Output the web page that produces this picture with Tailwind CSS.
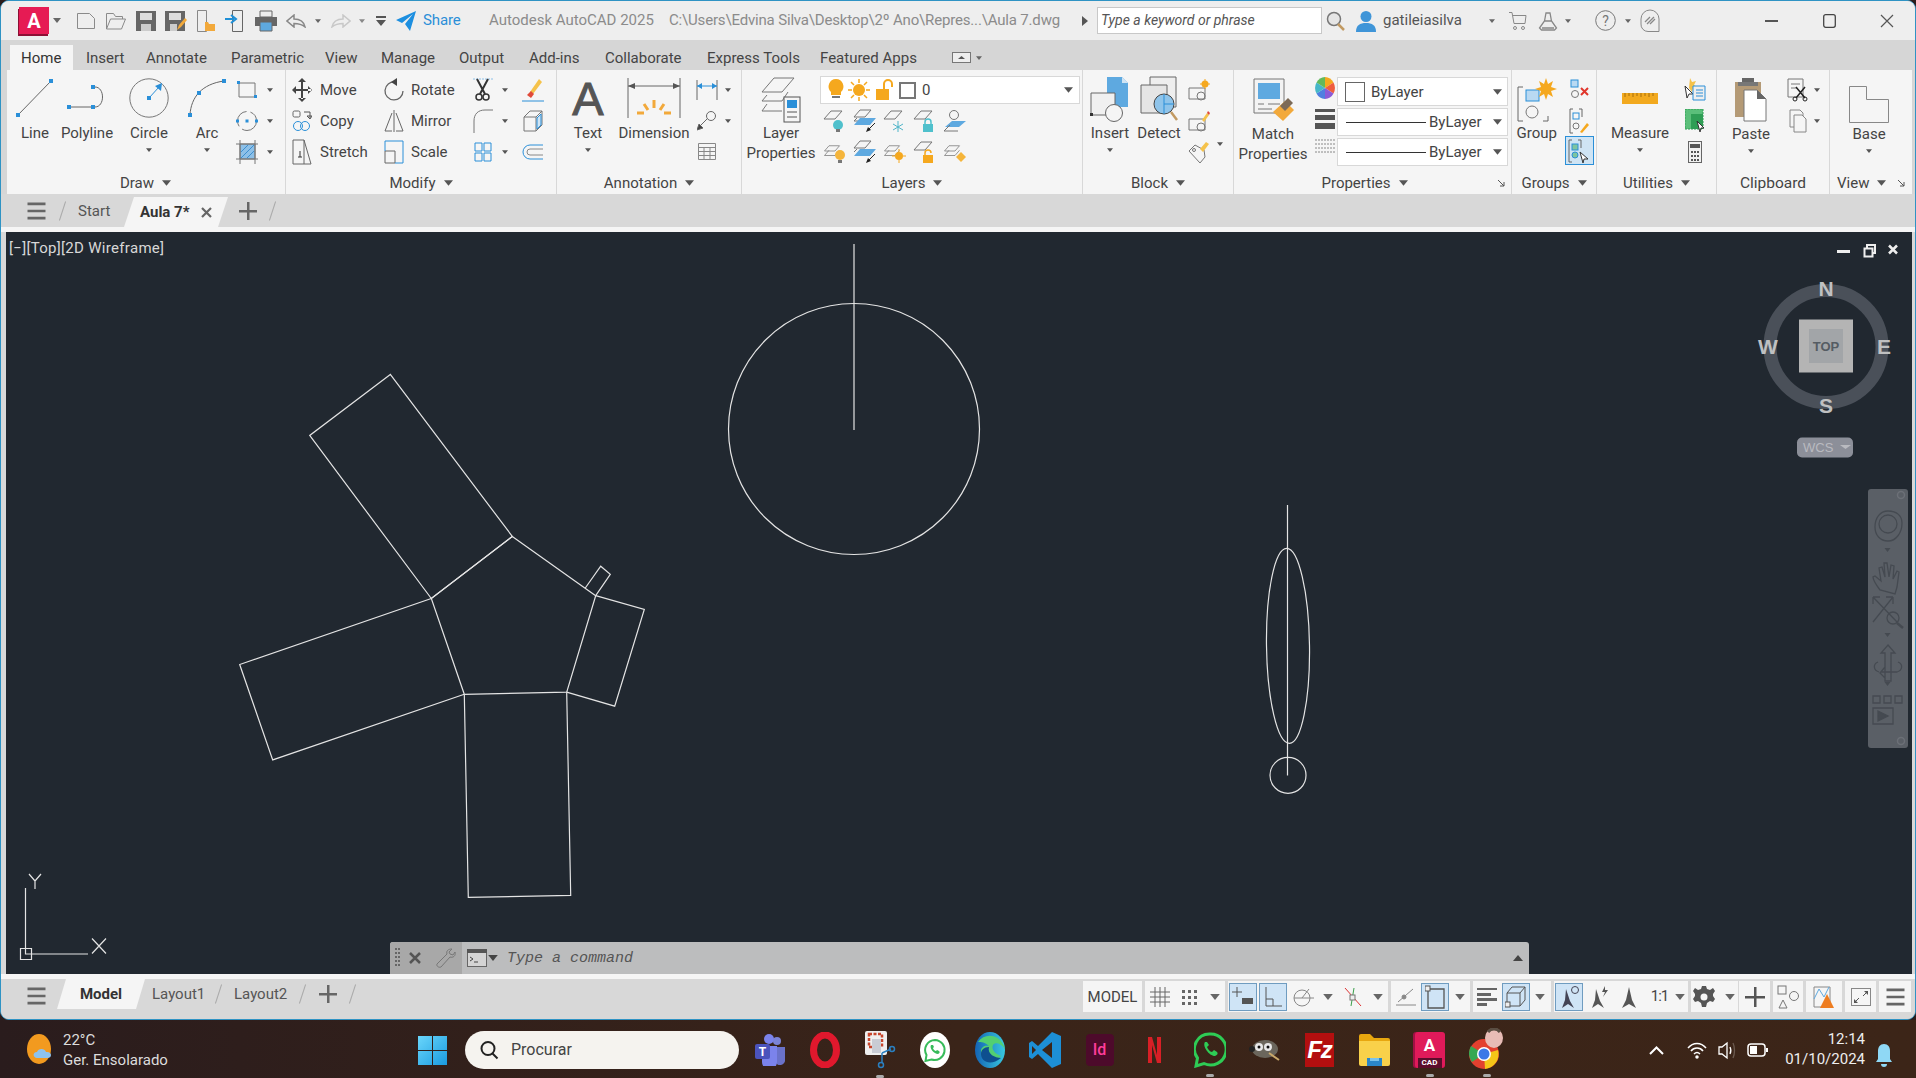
<!doctype html>
<html><head><meta charset="utf-8"><script src="https://cdn.jsdelivr.net/npm/@tailwindcss/browser@4"></script></head>
<body class="m-0 overflow-hidden bg-[#2b1d1c]">
<svg width="0" height="0" class="absolute"><defs>
<symbol id="c" viewBox="0 0 8 5"><path d="M0 0h8L4 5z"/></symbol>
<symbol id="lay" viewBox="0 0 24 24"><path d="M2 12l6-7h14l-6 7zM2 18l6-7M16 18l6-7M2 18h14" fill="none" stroke="#777" stroke-width="1"/></symbol>
<symbol id="ham" viewBox="0 0 22 20"><path d="M1 2h20M1 10h20M1 18h20" stroke="#666" stroke-width="3"/></symbol>
</defs></svg>
<div class="w-[1916px] h-[1078px] flex flex-col font-[Roboto] text-[15px] text-[#444] overflow-hidden">
<div class="h-[1020px] flex flex-col border border-[#2f93c4] rounded-[9px] bg-[#d8d8d8] overflow-hidden shrink-0">

<!-- title bar -->
<div class="h-[39px] shrink-0 bg-[#eeeeee] flex items-center pl-[18px]">
 <div class="w-[30px] h-[27px] bg-[#e61b54] flex items-center justify-center text-white font-bold text-[20px] shadow-[-1px_2px_0_#8c1034]">A</div>
 <div class="w-[16px] flex justify-center"><svg width="8" height="5" fill="#666"><use href="#c"/></svg></div>
 <div class="w-[30px] ml-[6px] flex justify-center"><svg width="20" height="20" fill="none" stroke="#8a8a8a"><path d="M1.500 2.500h12l5 5v10h-17z"/></svg></div>
 <div class="w-[30px] flex justify-center"><svg width="22" height="20" fill="none" stroke="#8a8a8a"><path d="M1.500 18V2.500h7l2 3h7V8M1.500 18l4-10h15l-4 10z"/></svg></div>
 <div class="w-[30px] flex justify-center"><svg width="20" height="22"><path d="M0 1h20v20H0z" fill="#666"/><path d="M4 3h12v7H4z" fill="#ddd"/><path d="M5 14h10v7H5z" fill="#ccc"/></svg></div>
 <div class="w-[30px] flex justify-center"><svg width="22" height="22"><path d="M0 1h20v20H0z" fill="#666"/><path d="M4 3h12v7H4z" fill="#ddd"/><path d="M5 14h7v7H5z" fill="#ccc"/><path d="M12 20l2-5 6-7 2 2-6 7z" fill="#f2a93b"/></svg></div>
 <div class="w-[30px] flex justify-center"><svg width="20" height="24" fill="none"><path d="M1.500 1.500h9v21h-9z" stroke="#888"/><path d="M9 13h3l1 2h6v7H9z" fill="#f2a93b"/></svg></div>
 <div class="w-[30px] flex justify-center"><svg width="22" height="24" fill="none"><path d="M7.500 1.500h10v21h-10z" stroke="#666"/><path d="M0 10h9M6 6l5 4-5 4" stroke="#1f8fd6" stroke-width="2"/></svg></div>
 <div class="w-[30px] flex justify-center"><svg width="22" height="22"><path d="M5 1h12v6H5z" fill="none" stroke="#666"/><path d="M0 7h22v9H0z" fill="#666"/><path d="M5 12h12v9H5z" fill="#5ea9e0" stroke="#666"/></svg></div>
 <div class="w-[30px] flex justify-center"><svg width="20" height="14" fill="none" stroke="#888" stroke-width="1.500"><path d="M8 1L1 7l7 6V9.500c5 0 8 1 11 3.500-1-5-5-8-11-8z"/></svg></div>
 <div class="w-[14px] flex justify-center"><svg width="6" height="4" fill="#666"><use href="#c"/></svg></div>
 <div class="w-[32px] flex justify-center"><svg width="20" height="14" fill="none" stroke="#c8c8c8" stroke-width="1.500"><path d="M12 1l7 6-7 6V9.500c-5 0-8 1-11 3.500 1-5 5-8 11-8z"/></svg></div>
 <div class="w-[10px] flex justify-center"><svg width="6" height="4" fill="#888"><use href="#c"/></svg></div>
 <div class="w-[28px] flex justify-center"><svg width="10" height="10" fill="#555"><path d="M0 0h10v2H0zM0 4h10L5 10z"/></svg></div>
 <div class="w-[22px] flex justify-center"><svg width="20" height="20" fill="#1d8fe0"><path d="M0 9L20 0 14 20 9 13 17 3 6 12z"/></svg></div>
 <div class="w-[66px] ml-[6px] text-[#2b8fd8] text-[15px] tracking-[-0.1px]">Share</div>
 <div class="w-[180px] text-[#8b8b8b] text-[15px] whitespace-nowrap">Autodesk AutoCAD 2025</div>
 <div class="w-[413px] text-[#8b8b8b] text-[15px] tracking-[-.17px] whitespace-nowrap">C:\Users\Edvina Silva\Desktop\2º Ano\Repres...\Aula 7.dwg</div>
 <div class="w-[15px]"><svg width="6" height="10" fill="#555"><path d="M0 0l6 5-6 5z"/></svg></div>
 <div class="w-[225px] h-[27px] bg-white border border-[#c8c8c8] flex items-center pl-[3px] italic text-[14px] text-[#555]">Type a keyword or phrase</div>
 <div class="w-[28px] flex justify-center"><svg width="20" height="20" fill="none"><circle cx="8" cy="8" r="6.500" fill="#e5e5e5" stroke="#777" stroke-width="1.500"/><path d="M12 13l6 6" stroke="#c29a62" stroke-width="2.500"/></svg></div>
 <div class="w-[30px] ml-[1px] flex justify-center"><svg width="22" height="22" fill="#3f95d8"><circle cx="11" cy="6.500" r="5.500"/><path d="M1 22c0-7 4-9 10-9s10 2 10 9z"/></svg></div>
 <div class="w-[100px] ml-[2px] text-[15px] text-[#555]">gatileiasilva</div>
 <div class="w-[18px] flex justify-center"><svg width="6" height="4" fill="#666"><use href="#c"/></svg></div>
 <div class="w-[34px] flex justify-center"><svg width="18" height="20" fill="none" stroke="#888"><path d="M0 1.500h3l2 11h11l1-8H4"/><circle cx="6" cy="17" r="1.500"/><circle cx="14" cy="17" r="1.500"/></svg></div>
 <div class="w-[26px] flex justify-center"><svg width="20" height="22" fill="none" stroke="#888" stroke-width="1.300"><path d="M8 3h4l1.500 8 5 7-2 2H3.500l-2-2 5-7zM6.500 11h7M4 18h12"/></svg></div>
 <div class="w-[14px] flex justify-center"><svg width="6" height="4" fill="#666"><use href="#c"/></svg></div>
 <div class="w-[30px] ml-[15px] flex justify-center"><svg width="21" height="21" fill="none" stroke="#777"><circle cx="10.500" cy="10.500" r="9.800"/><text x="10.500" y="15.500" text-anchor="middle" font-size="14" fill="#777" stroke="none">?</text></svg></div>
 <div class="w-[16px] flex justify-center"><svg width="6" height="4" fill="#666"><use href="#c"/></svg></div>
 <div class="w-[28px] flex justify-center"><svg width="20" height="24" fill="none" stroke="#888"><path d="M10 1a9 9 0 0 1 9 9v12.500H8A7 7 0 0 1 1 15v-5a9 9 0 0 1 9-9z"/><path d="M5 13l5-5M7 15l7-7M10 15l5-5" stroke-width="1.300"/></svg></div>
 <div class="w-[48px] ml-[83px] flex justify-center"><svg width="13" height="2" fill="#555"><path d="M0 0h13v2H0z"/></svg></div>
 <div class="w-[48px] ml-[10px] flex justify-center"><svg width="13" height="14" fill="none" stroke="#444" stroke-width="1.300"><rect x=".7" y=".7" width="11.600" height="12.600" rx="2"/></svg></div>
 <div class="w-[48px] ml-[10px] flex justify-center"><svg width="14" height="14" fill="none" stroke="#555" stroke-width="1.200"><path d="M1 1l12 12M13 1L1 13"/></svg></div>
</div>

<!-- ribbon tabs -->
<div class="h-[30px] shrink-0 bg-[#d6d6d6] flex items-end pl-[9px] text-[15px] text-[#444]">
 <div class="w-[63px] h-[25px] bg-[#f5f5f5] pl-[11px] leading-[26px] text-[#333]">Home</div>
 <div class="w-[60px] ml-[13px] leading-[23px]">Insert</div>
 <div class="w-[85px] leading-[23px]">Annotate</div>
 <div class="w-[94px] leading-[23px]">Parametric</div>
 <div class="w-[56px] leading-[23px]">View</div>
 <div class="w-[78px] leading-[23px]">Manage</div>
 <div class="w-[70px] leading-[23px]">Output</div>
 <div class="w-[76px] leading-[23px]">Add-ins</div>
 <div class="w-[102px] leading-[23px]">Collaborate</div>
 <div class="w-[113px] leading-[23px]">Express Tools</div>
 <div class="w-[132px] leading-[23px]">Featured Apps</div>
 <div class="h-[25px] flex items-center gap-[5px]"><svg width="19" height="11" fill="none" stroke="#777"><rect x=".5" y=".5" width="18" height="10" fill="#eee"/><path d="M6 7l3.500-3L13 7z" fill="#555" stroke="none"/></svg><svg width="6" height="4" fill="#666"><use href="#c"/></svg></div>
</div>

<!-- ribbon -->
<div class="h-[124px] shrink-0 bg-[#d6d6d6] flex pl-[6px] pr-[3px]">
 <div class="flex-1 flex bg-[#f5f5f5] text-[15px] leading-[20px]">

 <!-- Draw -->
 <div class="w-[279px] shrink-0 flex flex-col border-r border-[#d8d8d8]">
  <div class="h-[102px] flex">
   <div class="w-[56px] flex flex-col items-center"><svg class="mt-[8px]" width="40" height="40" viewBox="0 0 40 40" fill="#2a8fd8"><path d="M3 37L36 3" stroke="#666"/><rect x="34" y="1" width="4" height="4"/><rect x="1" y="35" width="4" height="4"/></svg><span class="h-[20px] mt-[5px]">Line</span></div>
   <div class="w-[48px] flex flex-col items-center"><svg class="mt-[8px]" width="44" height="40" viewBox="0 0 44 40" fill="#2a8fd8"><path d="M4 29h26c10 0 10-20 0-20" fill="none" stroke="#666"/><rect x="2" y="27" width="4" height="4"/><rect x="26" y="27" width="4" height="4"/><rect x="26" y="7" width="4" height="4"/></svg><span class="h-[20px] mt-[5px] whitespace-nowrap">Polyline</span></div>
   <div class="w-[76px] flex flex-col items-center"><svg class="mt-[8px]" width="40" height="40" viewBox="0 0 40 40" fill="#2a8fd8"><circle cx="20" cy="20" r="19.200" fill="none" stroke="#777"/><path d="M20 20L30 9" stroke="#2a8fd8"/><rect x="18" y="18" width="4" height="4"/><path d="M33 5l-1 8-6-5z"/></svg><span class="h-[20px] mt-[5px]">Circle</span><svg class="mt-[5px]" width="6" height="4" fill="#555"><use href="#c"/></svg></div>
   <div class="w-[40px] flex flex-col items-center"><svg class="mt-[9px]" width="38" height="38" viewBox="0 0 38 38" fill="#2a8fd8"><path d="M2 36C3 18 14 5 36 2" fill="none" stroke="#666"/><rect y="34" width="4" height="4"/><rect x="9" y="12" width="4" height="4"/><rect x="34" width="4" height="4"/></svg><span class="h-[20px] mt-[6px]">Arc</span><svg class="mt-[5px]" width="6" height="4" fill="#555"><use href="#c"/></svg></div>
   <div class="flex flex-col pt-[4px]">
    <div class="h-[31px] flex items-center"><div class="w-[40px] flex justify-center"><svg width="20" height="18" fill="#2a8fd8"><path d="M2 2h16v14H2z" fill="none" stroke="#777"/><rect y="0" width="3" height="3"/><rect x="17" y="14" width="3" height="3"/></svg></div><svg width="6" height="4" fill="#555"><use href="#c"/></svg></div>
    <div class="h-[31px] flex items-center"><div class="w-[40px] flex justify-center"><svg width="22" height="22" fill="#2a8fd8"><circle cx="11" cy="11" r="9.500" fill="none" stroke="#777" stroke-dasharray="20 4"/><rect x="9.500" y="9.500" width="3" height="3"/><rect y="9.500" width="3" height="3"/><rect x="19" y="9.500" width="3" height="3"/></svg></div><svg width="6" height="4" fill="#555"><use href="#c"/></svg></div>
    <div class="h-[31px] flex items-center"><div class="w-[40px] flex justify-center"><svg width="22" height="24"><path d="M4 4h15v15H4z" fill="#8dc0e8" stroke="#777"/><path d="M5 12l7-7M5 18L18 5M11 18l7-7" stroke="#3c8fd0"/><path d="M0 4h23M0 19h23M4 0v24M19 0v24" stroke="#777"/></svg></div><svg width="6" height="4" fill="#555"><use href="#c"/></svg></div>
   </div>
  </div>
  <div class="h-[22px] flex items-center justify-center gap-[8px] text-[15px] -ml-[1px]">Draw<svg width="9" height="6" fill="#555"><use href="#c"/></svg></div>
 </div>

 <!-- Modify -->
 <div class="w-[271px] shrink-0 flex flex-col border-r border-[#d8d8d8]">
  <div class="h-[102px] flex pl-[6px] pt-[4px] text-[15px]">
   <div class="w-[91px] flex flex-col">
    <div class="h-[31px] flex items-center gap-[8px]"><svg width="20" height="24" viewBox="0 0 20 24" fill="#444"><path d="M9 3h2v18H9zM1 11h18v2H1zM10 0l4 4H6zM10 24l4-4H6zM0 12l4-4v8zM20 12l-4-4v8z"/></svg>Move</div>
    <div class="h-[31px] flex items-center gap-[8px]"><svg width="20" height="22" fill="none"><rect x="1" y="1" width="7" height="6" rx="1.500" stroke="#666"/><circle cx="6" cy="16" r="4.500" stroke="#2a8fd8"/><circle cx="13" cy="16" r="4.500" stroke="#2a8fd8"/><path d="M12 2h6v6M15 6l3 3 2-3z" stroke="#555"/></svg>Copy</div>
    <div class="h-[31px] flex items-center gap-[8px] whitespace-nowrap"><svg width="20" height="26" fill="none" stroke="#666"><path d="M1 1h11v24H1zM12 1l7 24h-7"/><path d="M8 18v-6M6 18h4" stroke="#333"/></svg>Stretch</div>
   </div>
   <div class="w-[89px] flex flex-col">
    <div class="h-[31px] flex items-center gap-[7px] pl-[1px]"><svg width="20" height="24" fill="none" stroke="#666"><path d="M11 4a9 9 0 1 0 8 9" stroke-width="1.300"/><path d="M13 0v8L7 4z" fill="#444" stroke="none"/></svg>Rotate</div>
    <div class="h-[31px] flex items-center gap-[7px] pl-[1px]"><svg width="20" height="22" fill="none" stroke="#666"><path d="M10 0v22M8 3L1 21h7M12 3l7 18h-7"/></svg>Mirror</div>
    <div class="h-[31px] flex items-center gap-[7px] pl-[1px]"><svg width="20" height="24" fill="none"><path d="M1 11h10v12H1z" stroke="#666"/><path d="M1 1h18v22H11" stroke="#2a8fd8"/><path d="M1 1v10" stroke="#2a8fd8"/></svg>Scale</div>
   </div>
   <div class="flex flex-col">
    <div class="h-[31px] flex items-center"><div class="w-[22px] flex justify-center"><svg width="20" height="24" fill="none"><path d="M0 1h20" stroke="#8dc0e8" stroke-dasharray="2 1"/><path d="M4 1l8 15M15 1L7 16" stroke="#333" stroke-width="2"/><circle cx="6" cy="19" r="3" stroke="#333" stroke-width="1.500"/><circle cx="13" cy="19" r="3" stroke="#333" stroke-width="1.500"/></svg></div><svg class="ml-[8px]" width="6" height="4" fill="#555"><use href="#c"/></svg><div class="w-[22px] ml-[14px] flex justify-center"><svg width="22" height="24"><path d="M8 14l9-13 3 3-9 12z" fill="#f5c24a"/><path d="M5 17l4-4 3 3-3 4z" fill="#e04a3a"/><path d="M0 23h22" stroke="#2a8fd8"/></svg></div></div>
    <div class="h-[31px] flex items-center"><div class="w-[22px] flex justify-center"><svg width="20" height="24" fill="none" stroke="#777"><path d="M1 24V12C1 5 5 1 12 1h8"/></svg></div><svg class="ml-[8px]" width="6" height="4" fill="#555"><use href="#c"/></svg><div class="w-[22px] ml-[14px] flex justify-center"><svg width="20" height="22" fill="none" stroke="#777"><path d="M1 7h12v14H1zM1 7l6-6h12v14l-6 6M13 7l6-6"/><path d="M14 8l4-4v11l-4 4z" fill="#cfe4f4" stroke="#2a8fd8"/></svg></div></div>
    <div class="h-[31px] flex items-center"><div class="w-[22px] flex justify-center"><svg width="18" height="20" fill="none" stroke="#2a8fd8"><path d="M1 1h7v8H1zM10 1h7v8h-7zM1 11h7v8H1zM10 11h7v8h-7z"/></svg></div><svg class="ml-[8px]" width="6" height="4" fill="#555"><use href="#c"/></svg><div class="w-[22px] ml-[14px] flex justify-center"><svg width="22" height="16" fill="none" stroke="#2a8fd8"><path d="M21 1H8a7 7 0 0 0 0 14h13"/><path d="M21 5H8a3 3 0 0 0 0 6h13" stroke="#888"/></svg></div></div>
   </div>
  </div>
  <div class="h-[22px] flex items-center justify-center gap-[8px] text-[15px]">Modify<svg width="9" height="6" fill="#555"><use href="#c"/></svg></div>
 </div>

 <!-- Annotation -->
 <div class="w-[185px] shrink-0 flex flex-col border-r border-[#d8d8d8]">
  <div class="h-[102px] flex">
   <div class="w-[62px] flex flex-col items-center"><span class="h-[45px] text-[47px] leading-[45px] font-[Liberation_Sans] text-[#555] mt-[6px] [-webkit-text-stroke:1px_#555]">A</span><span class="h-[20px] mt-[2px]">Text</span><svg class="mt-[5px]" width="6" height="4" fill="#555"><use href="#c"/></svg></div>
   <div class="w-[70px] flex flex-col items-center"><svg class="mt-[8px]" width="56" height="44" fill="none"><path d="M2 0v40M54 0v40" stroke="#666"/><path d="M2 8h52" stroke="#666"/><path d="M2 8l7-3v6zM54 8l-7-3v6z" fill="#555"/><g stroke="#f2a93b" stroke-width="3"><path d="M28 22v8M18 26l4 6M38 26l-4 6M11 35h7M38 35h7"/></g></svg><span class="h-[20px] mt-[1px]">Dimension</span></div>
   <div class="flex flex-col pt-[4px]">
    <div class="h-[31px] flex items-center"><div class="w-[36px] flex justify-center"><svg width="22" height="22" fill="none"><path d="M1 1v20M21 1v20" stroke="#666"/><path d="M1 7h20" stroke="#2a8fd8"/><path d="M1 7l5-3v6zM21 7l-5-3v6z" fill="#2a8fd8"/></svg></div><svg width="6" height="4" fill="#555"><use href="#c"/></svg></div>
    <div class="h-[31px] flex items-center"><div class="w-[36px] flex justify-center"><svg width="20" height="20" fill="none" stroke="#666"><circle cx="14" cy="5" r="4.500"/><path d="M10 8l-8 8"/><path d="M0 19l2-6 4 4z" fill="#444"/></svg></div><svg width="6" height="4" fill="#555"><use href="#c"/></svg></div>
    <div class="h-[31px] flex items-center"><div class="w-[36px] flex justify-center"><svg width="18" height="17" fill="none" stroke="#888"><path d="M.5.500h17v16H.5zM.5 4.500h17M.5 8.500h17M.5 12.500h17M6 4.500v12M12 4.500v12"/></svg></div></div>
   </div>
  </div>
  <div class="h-[22px] flex items-center justify-center gap-[8px] text-[15px]">Annotation<svg width="9" height="6" fill="#555"><use href="#c"/></svg></div>
 </div>

 <!-- Layers -->
 <div class="w-[341px] shrink-0 flex flex-col border-r border-[#d8d8d8]">
  <div class="h-[102px] flex">
   <div class="w-[78px] flex flex-col items-center text-center"><svg class="mt-[7px]" width="40" height="46" fill="none" stroke="#777"><path d="M1 15L13 1h20l-12 14zM1 24l5-6M27 15L21 24H1M1 34l5-7M1 34h20"/><rect x="23" y="20" width="16" height="25" fill="#f5f5f5" stroke="#555"/><rect x="26" y="23" width="10" height="8" fill="#2a8fd8" stroke="none"/><path d="M26 35h10M26 40h10" stroke="#555"/></svg><span class="h-[20px] leading-[20px]">Layer</span><span class="h-[20px] leading-[20px]">Properties</span></div>
   <div class="w-[260px] flex flex-col">
    <div class="mt-[6px] h-[28px] bg-white border border-[#d8d8d8] flex items-center pl-[6px] gap-[3px]">
     <svg width="18" height="22"><path d="M9 0a7.500 7.500 0 0 1 5 13v3H4v-3A7.500 7.500 0 0 1 9 0z" fill="#f5a81e"/><path d="M5 17h8v2H5z" fill="#777"/></svg>
     <svg width="22" height="22"><circle cx="11" cy="11" r="6" fill="#f5a81e"/><path d="M11 0v4M11 18v4M0 11h4M18 11h4M3 3l3 3M16 16l3 3M3 19l3-3M16 6l3-3" stroke="#f5a81e" stroke-width="1.500"/></svg>
     <svg width="20" height="22" fill="none"><path d="M3 10h13v11H3z" fill="#f5a81e"/><path d="M11 10V5a4 4 0 0 1 8 0v3" stroke="#f5a81e" stroke-width="2"/></svg>
     <span class="w-[17px] h-[17px] ml-[3px] bg-white border-2 border-[#777]"></span>
     <span class="ml-[3px] text-[15px]">0</span>
     <svg class="ml-auto mr-[6px]" width="9" height="6" fill="#555"><use href="#c"/></svg>
    </div>
    <div class="h-[31px] mt-[1px] flex items-center">
     <div class="w-[30px] flex justify-center"><svg width="24" height="24"><path d="M1 10L8 2h11l-7 8z" fill="none" stroke="#777"/><circle cx="15" cy="16" r="5" fill="#4fc0cc"/><path d="M13 20h4v3h-4z" fill="#777"/></svg></div>
     <div class="w-[30px] flex justify-center"><svg width="24" height="24"><path d="M1 8L7 1h11l-6 7zM1 12l3-3M1 12h9" fill="none" stroke="#777"/><path d="M1 16l6-7h16l-6 7z" fill="#5ea9e0"/><path d="M22 14l-6 6" stroke="#222"/><path d="M13 23l2-5 3 3z" fill="#222"/></svg></div>
     <div class="w-[30px] flex justify-center"><svg width="24" height="24"><path d="M1 10L8 2h11l-7 8z" fill="none" stroke="#777"/><path d="M15 12v11M10 15l10 6M20 15l-10 6" stroke="#4fb5c8"/></svg></div>
     <div class="w-[30px] flex justify-center"><svg width="24" height="24" fill="none"><path d="M1 10L8 2h11l-7 8z" stroke="#777"/><rect x="10" y="15" width="10" height="8" fill="#4fc0cc"/><path d="M12 15v-2a3 3 0 0 1 6 0v2" stroke="#4fc0cc" stroke-width="1.500"/></svg></div>
     <div class="w-[30px] flex justify-center"><svg width="24" height="24" fill="none"><circle cx="11" cy="6" r="4.500" stroke="#777"/><path d="M2 18l7-6h14l-7 6z" fill="#5ea9e0"/><path d="M1 22l6-6M1 22h14" stroke="#777"/></svg></div>
    </div>
    <div class="h-[31px] flex items-center">
     <div class="w-[30px] flex justify-center"><svg width="24" height="24"><use href="#lay" width="18" height="22"/><circle cx="17" cy="15" r="5" fill="#f5b53b"/><path d="M15 20h4v3h-4z" fill="#777"/></svg></div>
     <div class="w-[30px] flex justify-center"><svg width="24" height="24"><path d="M1 8L7 1h11l-6 7zM1 12l3-3" fill="none" stroke="#777"/><path d="M1 16l6-7h16l-6 7z" fill="#5ea9e0"/><path d="M22 14l-6 6" stroke="#222"/><path d="M13 23l2-5 3 3z" fill="#222"/></svg></div>
     <div class="w-[30px] flex justify-center"><svg width="24" height="24"><use href="#lay" width="18" height="22"/><circle cx="16" cy="16" r="4" fill="#f5a81e"/><path d="M16 9v3M16 20v3M9 16h3M20 16h3" stroke="#f5a81e"/></svg></div>
     <div class="w-[30px] flex justify-center"><svg width="24" height="24" fill="none"><path d="M1 10L8 2h11l-7 8z" stroke="#777"/><rect x="10" y="15" width="10" height="8" fill="#f5a81e"/><path d="M12 15v-2a3 3 0 0 1 6 0" stroke="#f5a81e" stroke-width="1.500"/></svg></div>
     <div class="w-[30px] flex justify-center"><svg width="24" height="24"><use href="#lay" width="18" height="22"/><path d="M13 17l5-5 5 5-5 5z" fill="#f5b53b"/></svg></div>
    </div>
   </div>
  </div>
  <div class="h-[22px] flex items-center justify-center gap-[8px] text-[15px]">Layers<svg width="9" height="6" fill="#555"><use href="#c"/></svg></div>
 </div>

 <!-- Block -->
 <div class="w-[151px] shrink-0 flex flex-col border-r border-[#d8d8d8]">
  <div class="h-[102px] flex">
   <div class="w-[54px] flex flex-col items-center"><svg class="mt-[6px]" width="40" height="47" fill="none"><path d="M17 1h15l6 6v24H17z" fill="#5ea9e0"/><path d="M32 1l6 6h-6z" fill="#cfe4f4"/><path d="M1 17h24v22H1z" fill="#f0f0f0" stroke="#666"/><circle cx="24" cy="37" r="8.500" fill="#f5f5f5" stroke="#666"/><rect y="37" width="3" height="3" fill="#333"/></svg><span class="h-[20px]">Insert</span><svg class="mt-[5px]" width="6" height="4" fill="#555"><use href="#c"/></svg></div>
   <div class="w-[44px] flex flex-col items-center"><svg class="mt-[6px]" width="38" height="47" fill="none"><path d="M10 1h26v30H10z" fill="#eee" stroke="#666"/><path d="M1 9h26v28H1z" fill="#e5e5e5" stroke="#666"/><circle cx="24" cy="28" r="10" fill="#8fc4ea" stroke="#444"/><path d="M24 18v20M24 28h10" stroke="#2a8fd8"/><path d="M31 36l6 8" stroke="#c29a62" stroke-width="2.500"/></svg><span class="h-[20px]">Detect</span></div>
   <div class="w-[36px] flex flex-col pt-[4px] items-center">
    <div class="h-[31px] flex items-center"><svg width="22" height="22" fill="none"><path d="M1 9h16v11H1z" stroke="#777"/><circle cx="13" cy="17" r="4" stroke="#777"/><circle cx="17" cy="5" r="3.500" fill="#f5a81e"/><path d="M17 0v10M12 5h10" stroke="#f5a81e"/></svg></div>
    <div class="h-[31px] flex items-center"><svg width="22" height="22" fill="none"><path d="M1 9h16v11H1z" stroke="#777"/><circle cx="13" cy="17" r="4" stroke="#777"/><path d="M14 10l5-7 2 2-5 7z" fill="#f5c24a"/><path d="M19 3l1-2 2 2-1 2z" fill="#e04a3a"/></svg></div>
    <div class="h-[31px] flex items-center"><svg width="22" height="24" fill="none" stroke="#777"><path d="M1 11l6-6 9 5 1 7-5 6z"/><circle cx="6" cy="10" r="1.500"/><path d="M12 9l6-7 3 2-6 8z" fill="#f5c24a" stroke="none"/></svg></div>
   </div>
   <div class="flex flex-col justify-end pb-[26px]"><svg width="6" height="4" fill="#555"><use href="#c"/></svg></div>
  </div>
  <div class="h-[22px] flex items-center justify-center gap-[8px] text-[15px]">Block<svg width="9" height="6" fill="#555"><use href="#c"/></svg></div>
 </div>

 <!-- Properties -->
 <div class="w-[278px] shrink-0 flex flex-col border-r border-[#d8d8d8] relative">
  <div class="h-[102px] flex">
   <div class="w-[78px] flex flex-col items-center text-center"><svg class="mt-[8px]" width="44" height="44" fill="none"><path d="M3 1h30v34H3z" fill="#f3f3f3" stroke="#777"/><rect x="7" y="5" width="22" height="16" fill="#5ea9e0"/><path d="M7 26h6M7 31h14M17 26h12" stroke="#777"/><path d="M22 34l12-11 9 9-11 11z" fill="#f2a93b"/><path d="M29 28l8-8 5 5-8 8z" fill="#7c6a57"/></svg><span class="h-[20px] leading-[20px] mt-[2px]">Match</span><span class="h-[20px] leading-[20px]">Properties</span></div>
   <div class="w-[25px] flex flex-col items-center pt-[7px] gap-[10px]">
    <svg width="20" height="22" viewBox="0 0 20 22"><path d="M10 11V0a10 11 0 0 1 8.500 5.500z" fill="#f5a81e"/><path d="M10 11l8.500-5.500A10 11 0 0 1 18.500 16.500z" fill="#ef5d3f"/><path d="M10 11l8.500 5.500A10 11 0 0 1 10 22z" fill="#8b5bd6"/><path d="M10 11v11A10 11 0 0 1 1.500 16.500z" fill="#4f7fe0"/><path d="M10 11L1.500 16.500a10 11 0 0 1 0-11z" fill="#46b7c9"/><path d="M10 11L1.500 5.500A10 11 0 0 1 10 0z" fill="#62b95a"/></svg>
    <svg width="20" height="20" fill="#555"><path d="M0 0h20v3H0zM0 6h20v5H0zM0 14h20v6H0z"/></svg>
    <svg width="20" height="16" fill="none" stroke="#888" stroke-dasharray="2 1"><path d="M0 1h20M0 5h20M0 9h20M0 13h20"/></svg>
   </div>
   <div class="w-[171px] flex flex-col pt-[7px] gap-[2px] text-[15px]">
    <div class="h-[29px] bg-white border border-[#d8d8d8] flex items-center pl-[7px]"><span class="w-[20px] h-[20px] border border-[#666] bg-white"></span><span class="ml-[6px]">ByLayer</span><svg class="ml-auto mr-[5px]" width="9" height="6" fill="#555"><use href="#c"/></svg></div>
    <div class="h-[28px] bg-white border border-[#d8d8d8] flex items-center pl-[8px]"><span class="w-[80px] h-[1px] bg-[#333]"></span><span class="ml-[3px]">ByLayer</span><svg class="ml-auto mr-[5px]" width="9" height="6" fill="#555"><use href="#c"/></svg></div>
    <div class="h-[28px] bg-white border border-[#d8d8d8] flex items-center pl-[8px]"><span class="w-[80px] h-[1px] bg-[#333]"></span><span class="ml-[3px]">ByLayer</span><svg class="ml-auto mr-[5px]" width="9" height="6" fill="#555"><use href="#c"/></svg></div>
   </div>
  </div>
  <div class="h-[22px] flex items-center justify-center gap-[8px] text-[15px] pr-[16px]">Properties<svg width="9" height="6" fill="#555"><use href="#c"/></svg></div>
  <svg class="absolute right-[6px] bottom-[7px]" width="7" height="7" fill="none" stroke="#555"><path d="M0 0l6 6M6 2v4H2"/></svg>
 </div>

 <!-- Groups -->
 <div class="w-[85px] shrink-0 flex flex-col border-r border-[#d8d8d8]">
  <div class="h-[102px] flex">
   <div class="w-[50px] flex flex-col items-center"><svg class="mt-[8px]" width="40" height="44" fill="none"><path d="M6 9H1v34h5M26 43h5V38" stroke="#666"/><rect x="9" y="12" width="13" height="11" fill="#b9d9f2" stroke="#2a8fd8"/><circle cx="15" cy="34" r="6" stroke="#777"/><path d="M29 0l2 6 5-3-2 6 6 2-6 2 2 6-5-3-2 6-2-6-5 3 2-6-6-2 6-2-2-6 5 3z" fill="#f5a81e"/></svg><span class="h-[20px] mt-[1px]">Group</span></div>
   <div class="flex flex-col pt-[4px] w-[34px] items-center ml-[1px]">
    <div class="h-[31px] flex items-center"><svg width="20" height="24" fill="none"><rect x="2" y="2" width="7" height="7" fill="#b9d9f2" stroke="#2a8fd8"/><circle cx="6" cy="16" r="3.500" stroke="#777"/><path d="M12 10l7 7M19 10l-7 7" stroke="#e0362c" stroke-width="2"/></svg></div>
    <div class="h-[31px] flex items-center"><svg width="20" height="26" fill="none"><path d="M4 1H1v24h3M10 1h3v8" stroke="#666"/><rect x="4" y="5" width="6" height="6" stroke="#2a8fd8"/><circle cx="7" cy="18" r="3" stroke="#777"/><path d="M11 24l7-9 2 2-7 8z" fill="#f5a81e"/></svg></div>
    <div class="h-[29px] w-[29px] bg-[#cfe4f4] border border-[#2a8fd8] flex items-center justify-center"><svg width="22" height="24" fill="none"><path d="M4 1H1v22h3M10 1h3v8" stroke="#666"/><rect x="4" y="5" width="6" height="6" fill="#7dc4a0" stroke="#2a8fd8"/><circle cx="7" cy="16" r="3" fill="#7dc4a0" stroke="#2a8fd8"/><path d="M12 13l8 7-4 0-1 4z" fill="#fff" stroke="#333"/></svg></div>
   </div>
  </div>
  <div class="h-[22px] flex items-center justify-center gap-[8px] text-[15px]">Groups<svg width="9" height="6" fill="#555"><use href="#c"/></svg></div>
 </div>

 <!-- Utilities -->
 <div class="w-[120px] shrink-0 flex flex-col border-r border-[#d8d8d8]">
  <div class="h-[102px] flex">
   <div class="w-[86px] flex flex-col items-center"><svg class="mt-[23px] mb-[19px]" width="36" height="11"><path d="M0 0h36v11H0z" fill="#f2a91e"/><path d="M3 0v4M7 0v3M11 0v4M15 0v3M19 0v4M23 0v3M27 0v4M31 0v3" stroke="#a76f0a"/></svg><span class="h-[20px]">Measure</span><svg class="mt-[5px]" width="6" height="4" fill="#555"><use href="#c"/></svg></div>
   <div class="flex flex-col pt-[4px] w-[24px] items-center">
    <div class="h-[31px] flex items-center"><svg width="22" height="24" fill="none"><path d="M6 0l2 4 4-1-2 4 4 3-5 0-1 4-3-4z" fill="#f5c24a"/><path d="M1 8l8 8-4 0-2 4z" fill="#fff" stroke="#333"/><path d="M9 8h12v14H9z" fill="#eee" stroke="#2a8fd8"/><path d="M12 12h7M12 15h7M12 18h7" stroke="#2a8fd8"/></svg></div>
    <div class="h-[31px] flex items-center"><svg width="20" height="24"><path d="M0 0h18v20H0z" fill="#5bbf7a" stroke="#2f9e55" stroke-dasharray="2 1"/><path d="M6 5h12v15H6z" fill="#2f9e55"/><path d="M12 12l7 7-3 0-1 4z" fill="#fff" stroke="#333"/></svg></div>
    <div class="h-[31px] flex items-center"><svg width="14" height="22"><rect x=".5" y=".5" width="13" height="21" fill="#f0f0f0" stroke="#666"/><path d="M2 3h10v4H2z" fill="#555"/><path d="M3 10h2v2H3zM6 10h2v2H6zM9 10h2v2H9zM3 14h2v2H3zM6 14h2v2H6zM9 14h2v2H9zM3 18h2v2H3zM6 18h2v2H6zM9 18h2v2H9z" fill="#555"/></svg></div>
   </div>
  </div>
  <div class="h-[22px] flex items-center justify-center gap-[8px] text-[15px]">Utilities<svg width="9" height="6" fill="#555"><use href="#c"/></svg></div>
 </div>

 <!-- Clipboard -->
 <div class="w-[113px] shrink-0 flex flex-col border-r border-[#d8d8d8]">
  <div class="h-[102px] flex">
   <div class="w-[68px] flex flex-col items-center"><svg class="mt-[8px]" width="32" height="44"><path d="M0 4h26v35H0z" fill="#b49a76"/><path d="M7 4h12V0H7z" fill="#666"/><path d="M3 4h20v4H3z" fill="#777"/><path d="M9 12h13l9 9v22H9z" fill="#fff" stroke="#777"/><path d="M22 12l9 9h-9z" fill="#666"/></svg><span class="h-[20px] mt-[2px]">Paste</span><svg class="mt-[5px]" width="6" height="4" fill="#555"><use href="#c"/></svg></div>
   <div class="flex flex-col pt-[4px]">
    <div class="h-[31px] flex items-center"><div class="w-[26px] flex justify-center"><svg width="22" height="24" fill="none"><path d="M1 1h15v18H1zM4 6h9M4 10h6" stroke="#777"/><path d="M9 9l9 11M18 9L9 20" stroke="#222" stroke-width="1.500"/><circle cx="8" cy="21" r="2" stroke="#222"/><circle cx="18" cy="21" r="2" stroke="#222"/></svg></div><svg class="ml-[3px]" width="6" height="4" fill="#555"><use href="#c"/></svg></div>
    <div class="h-[31px] flex items-center"><div class="w-[26px] flex justify-center"><svg width="18" height="24" fill="none" stroke="#888"><path d="M1 1h10l3 3v4M1 1v17h4"/><path d="M5 6h8l4 4v13H5z" fill="#f5f5f5"/></svg></div><svg class="ml-[3px]" width="6" height="4" fill="#555"><use href="#c"/></svg></div>
   </div>
  </div>
  <div class="h-[22px] flex items-center justify-center text-[15.500px]">Clipboard</div>
 </div>

 <!-- View -->
 <div class="flex-1 flex flex-col relative">
  <div class="h-[102px] flex"><div class="w-[78px] flex flex-col items-center"><svg class="mt-[16px]" width="40" height="37" fill="none" stroke="#888"><path d="M.5.500h17v13h22v23H.5z"/></svg><span class="h-[20px] mt-[1px]">Base</span><svg class="mt-[5px]" width="6" height="4" fill="#555"><use href="#c"/></svg></div></div>
  <div class="h-[22px] flex items-center gap-[8px] text-[15px] pl-[7px]">View<svg width="9" height="6" fill="#555"><use href="#c"/></svg></div>
  <svg class="absolute right-[7px] bottom-[7px]" width="7" height="7" fill="none" stroke="#555"><path d="M0 0l6 6M6 2v4H2"/></svg>
 </div>
 </div>
</div>

<!-- document tabs -->
<div class="h-[33px] shrink-0 bg-[#d8d8d8] flex items-center text-[15px]">
 <div class="w-[70px] flex justify-center"><svg width="21" height="18"><use href="#ham"/></svg></div>
 <span class="w-[1px] h-[20px] bg-[#aaa] rotate-[18deg] -ml-[9px]"></span>
 <span class="ml-[15px] w-[46px] text-[#555] pt-[2px]">Start</span>
 <div class="w-[104px] h-[30px] self-end bg-[#f5f5f5] flex items-center pl-[16px] gap-[11px] font-bold text-[#333] [clip-path:polygon(10px_0,100%_0,calc(100%-10px)_100%,0_100%)]">Aula 7*<svg width="11" height="11" stroke="#666" stroke-width="2.200"><path d="M1 1l9 9M10 1l-9 9"/></svg></div>
 <svg class="ml-[11px]" width="18" height="18" fill="#666"><path d="M8 0h2.500v18H8zM0 8h18v2.500H0z"/></svg>
 <span class="w-[1px] h-[20px] bg-[#aaa] rotate-[18deg] ml-[15px]"></span>
</div>
<div class="h-[5px] shrink-0 bg-[#f5f5f5]"></div>

<!-- canvas -->
<div class="h-[742px] shrink-0 bg-[#d8d8d8] flex pl-[5px] pr-[3px]">
<div class="relative flex-1 bg-[#212830] overflow-hidden">
 <svg class="absolute inset-0" width="1906" height="742" viewBox="6 232 1906 742" fill="none">
  <g stroke="#e4e4e4" stroke-width="1.200">
   <path d="M390.300 374.400L309.700 435.400L431.300 598.500L512.300 536.400Z"/>
   <path d="M431.300 598.500L512.300 536.400L595.700 595.700L566.700 692.200L464.300 694.300Z"/>
   <path d="M585.300 588L600.700 566.200L610.300 574.300L595.700 595.700"/>
   <path d="M595.700 595.700L644.300 609.400L614.700 706.200L566.700 692.200"/>
   <path d="M431.300 598.500L239.700 664.500L272.700 759.900L464.300 694.300"/>
   <path d="M464.300 694.300L468.300 897.400L570.700 895.300L566.700 692.200"/>
   <circle cx="854" cy="429" r="125.500"/>
   <path d="M854 244V430"/>
   <ellipse cx="1288" cy="645.800" rx="21.500" ry="97.500" transform="rotate(-0.800 1288 645.800)"/>
   <path d="M1287.500 505V775.500"/>
   <circle cx="1288" cy="775.300" r="18"/>
   <path d="M25.500 888V954H88M20.500 948.500H31.500V959.500H20.500Z"/>
   <path d="M92 938.500L106 953.500M106 938.500L92 953.500M29 874L35 881L41 874M35 881V889"/>
  </g>
  <!-- view cube -->
  <circle cx="1826" cy="346.500" r="56" stroke="#4a5059" stroke-width="13"/>
  <rect x="1799" y="319.500" width="54" height="53" fill="#b4b4b4"/>
  <rect x="1809" y="329" width="34" height="34" fill="#a2a5a8"/>
  <text x="1826" y="351" text-anchor="middle" font-family="Liberation Sans" font-weight="700" font-size="13" fill="#555c63">TOP</text>
  <g font-family="Liberation Sans" font-weight="700" font-size="21" fill="#bfc0c1" text-anchor="middle">
   <text x="1826" y="296">N</text><text x="1826" y="413">S</text><text x="1884" y="354">E</text><text x="1768" y="354">W</text>
  </g>
  <rect x="1797" y="437.500" width="56" height="20" rx="5" fill="#8c8f99"/>
  <text x="1803" y="452" font-family="Liberation Sans" font-size="13" fill="#b9bac0">WCS</text>
  <path d="M1840 445h11l-5.500 4z" fill="#b9bac0"/>
  <!-- viewport controls -->
  <path d="M1837 250h13v3h-13z" fill="#eee"/>
  <path d="M1864.500 248.500h8v8h-8zM1867 248v-3h8v8h-2.500" stroke="#eee" stroke-width="2"/>
  <path d="M1889 245.500l8 8M1897 245.500l-8 8" stroke="#eee" stroke-width="2.500"/>
  <!-- nav bar -->
  <rect x="1868" y="489" width="40" height="259" rx="3" fill="#5a5f66"/>
  <circle cx="1901" cy="495" r="3.500" stroke="#6c7077" stroke-width="1.500"/><circle cx="1901" cy="741" r="3.500" stroke="#6c7077" stroke-width="1.500"/>
  <g stroke="#454a51" stroke-width="1.300">
   <path d="M1888 511c9 0 14 5 14 12 0 10-6 18-14 18s-13-6-13-14c0-9 5-16 13-16z"/><circle cx="1888" cy="524" r="9"/>
   <path transform="translate(0 12)" d="M1880 578c-3-4-7-10-7-13l2-1 6 5-2-13 3-1 3 10-1-14 3 0 2 14 2-12 3 1-1 13 4-8 2 1-2 15-2 7z"/>
   <path d="M1873 597l24 25M1893 597l-20 25M1873 597l7 0M1873 597v7M1893 597h-7M1893 597v7"/><circle cx="1893" cy="618" r="6"/><path d="M1897 623l6 5" stroke-width="2.500"/>
   <path d="M1888 645l7 8h-4v28h-6v-28h-4zM1878 662c-5 2-5 8 1 10M1898 662c5 2 5 8-1 10h-16M1885 667l-5 6 5 5"/>
   <path d="M1873 696h7v7h-7zM1884 696h7v7h-7zM1895 696h7v7h-7zM1873 708h20v16h-20z"/><path d="M1878 711l10 5-10 5z" fill="#454a51"/>
  </g>
  <path d="M1884.500 548h6l-3 4zM1884.500 633h6l-3 4zM1884.500 682h6l-3 4z" fill="#454a51"/>
 </svg>
 <div class="absolute left-[3px] top-[6px] text-[15px] tracking-[.3px] leading-[20px] text-[#d8d8d8]">[−][Top][2D Wireframe]</div>
 <div class="absolute bottom-0 left-[384px] w-[1139px] h-[32px] bg-[#bcbdbe] rounded-t-[3px] flex items-center overflow-hidden">
  <div class="w-[72px] h-full bg-[#a8a8a8] flex items-center pl-[5px] gap-[8px] shrink-0">
   <svg width="6" height="20" fill="#666"><path d="M0 0h2v2H0zM3 0h2v2H3zM0 4h2v2H0zM3 4h2v2H3zM0 8h2v2H0zM3 8h2v2H3zM0 12h2v2H0zM3 12h2v2H3zM0 16h2v2H0zM3 16h2v2H3z"/></svg>
   <svg width="12" height="12" stroke="#555" stroke-width="2.500"><path d="M1 1l10 10M11 1L1 11"/></svg>
   <svg class="ml-[7px]" width="20" height="20" fill="none" stroke="#777"><path d="M1 16L11 6c-1-3 1-5 5-5l-3 3 1 2 3 1 2-3c1 4-2 6-5 5L5 19c-2 1-5-1-4-3z"/></svg>
  </div>
  <svg class="ml-[5px]" width="20" height="18"><rect x=".5" y=".5" width="19" height="17" fill="#d4d4d4" stroke="#666"/><path d="M0 0h20v4H0z" fill="#555"/><path d="M3 8l3 2-3 2M7 13h4" stroke="#444" fill="none"/></svg>
  <svg class="ml-[1px]" width="10" height="6" fill="#444"><use href="#c"/></svg>
  <span class="ml-[9px] pt-[2px] font-[Liberation_Mono] italic text-[15px] text-[#555]">Type a command</span>
  <svg class="ml-auto mr-[6px]" width="10" height="6" fill="#444"><path d="M0 6l5-6 5 6z"/></svg>
 </div>
</div></div>
<div class="h-[5px] shrink-0 bg-[#f5f5f5]"></div>

<!-- status bar -->
<div class="flex-1 bg-[#d8d8d8] flex text-[15px] relative">
 <div class="w-[56px] flex justify-center pt-[8px]"><svg class="ml-[14px]" width="21" height="18"><use href="#ham"/></svg></div>
 <div class="w-[88px] h-[30px] bg-[#f5f5f5] flex items-center justify-center font-bold text-[#333] [clip-path:polygon(9px_0,100%_0,calc(100%-9px)_100%,0_100%)] text-[15px]">Model</div>
 <div class="h-[30px] flex items-center text-[#555]">
  <span class="ml-[7px] w-[66px]">Layout1</span><span class="w-[1px] h-[20px] bg-[#aaa] rotate-[18deg]"></span><span class="ml-[15px] w-[68px]">Layout2</span><span class="w-[1px] h-[20px] bg-[#aaa] rotate-[18deg]"></span>
  <svg class="ml-[16px]" width="18" height="18" fill="#666"><path d="M8 0h2.500v18H8zM0 8h18v2.500H0z"/></svg><span class="w-[1px] h-[20px] bg-[#aaa] rotate-[18deg] ml-[15px]"></span>
 </div>
 <div class="absolute left-[1082px] top-[2px] h-[31px] flex gap-[3px] items-stretch">
  <div class="w-[59px] bg-[#f5f5f5] flex items-center justify-center text-[15px] text-[#444] pt-[1px]">MODEL</div>
  <div class="w-[80px] bg-[#f5f5f5] flex items-center pl-[5px]"><svg width="20" height="20" stroke="#666"><path d="M5 0v20M10 0v20M15 0v20M0 5h20M0 10h20M0 15h20"/></svg><svg class="ml-[11px]" width="16" height="16" fill="#666"><path d="M1 1h3v3H1zM7 1h3v3H7zM13 1h3v3h-3zM1 7h3v3H1zM7 7h3v3H7zM13 7h3v3h-3zM1 13h3v3H1zM7 13h3v3H7zM13 13h3v3h-3z"/></svg><svg class="ml-[13px]" width="10" height="6" fill="#666"><use href="#c"/></svg></div>
  <div class="w-[160px] bg-[#f5f5f5] flex items-center">
   <div class="ml-[1px] w-[28px] h-[28px] bg-[#cfe4f6] border border-[#6f9cc0] flex items-center justify-center"><svg width="22" height="20"><path d="M5 0v10M0 5h10" stroke="#555"/><rect x="10" y="11" width="11" height="6" fill="#555"/></svg></div>
   <div class="ml-[2px] w-[28px] h-[28px] bg-[#cfe4f6] border border-[#6f9cc0] flex items-center justify-center"><svg width="20" height="20" fill="none" stroke="#555"><path d="M3 0v19h16M3 12h7v7"/></svg></div>
   <div class="w-[32px] flex justify-center"><svg width="22" height="20" fill="none" stroke="#888"><circle cx="10" cy="11" r="8"/><path d="M2 11h8l7-9M10 11h12" stroke-width="1"/></svg></div>
   <svg class="ml-[4px]" width="10" height="6" fill="#666"><use href="#c"/></svg>
   <div class="w-[30px] ml-[5px] flex justify-center"><svg width="18" height="20"><path d="M1 1l16 18" stroke="#d33"/><path d="M10 1L7 19" stroke="#3a9f4a"/><rect x="6" y="8" width="5" height="5" fill="#eee" stroke="#777"/></svg></div>
   <svg class="ml-[5px]" width="10" height="6" fill="#666"><use href="#c"/></svg>
  </div>
  <div class="w-[79px] bg-[#f5f5f5] flex items-center">
   <div class="w-[30px] flex justify-center"><svg width="20" height="20" fill="none" stroke="#888"><path d="M0 18h20M2 15L17 2"/><circle cx="8" cy="10" r="2" fill="#888"/></svg></div>
   <div class="w-[28px] h-[28px] bg-[#cfe4f6] border border-[#6f9cc0] flex items-center justify-center shrink-0"><svg width="20" height="24" fill="none" stroke="#555"><path d="M3 4h16v19H3z" stroke-width="1.300"/><rect x="0" y="1" width="5" height="5" fill="#eee"/></svg></div>
   <svg class="ml-[6px]" width="10" height="6" fill="#666"><use href="#c"/></svg>
  </div>
  <div class="w-[78px] bg-[#f5f5f5] flex items-center">
   <div class="w-[28px] flex justify-center"><svg width="20" height="18" fill="#666"><path d="M0 0h20v2H0zM0 5h14v3H0zM0 10h20v3H0zM0 15h10v3H0z"/></svg></div>
   <div class="w-[28px] ml-[1px] h-[28px] bg-[#cfe4f6] border border-[#6f9cc0] flex items-center justify-center shrink-0"><svg width="22" height="22" fill="none" stroke="#555"><path d="M2 7h13v13H2zM2 7l5-6h13v13l-5 6M15 7l5-6"/><rect x="0" y="16" width="5" height="5" fill="#eee"/></svg></div>
   <svg class="ml-[5px]" width="10" height="6" fill="#666"><use href="#c"/></svg>
  </div>
  <div class="w-[134px] bg-[#f5f5f5] flex items-center">
   <div class="ml-[1px] w-[28px] h-[28px] bg-[#cfe4f6] border border-[#6f9cc0] flex items-center justify-center shrink-0"><svg width="22" height="24" fill="#445"><path d="M8 4l4 12 4 7-6-4-6 4 3-8z"/><circle cx="17" cy="5" r="3.500" fill="none" stroke="#445"/></svg></div>
   <div class="w-[31px] flex justify-center"><svg width="22" height="24" fill="#555"><path d="M8 4l4 12 4 7-6-4-6 4 3-8zM17 1l-3 6 3 0-2 5 5-7h-3z"/></svg></div>
   <div class="w-[30px] flex justify-center"><svg width="18" height="24" fill="#555"><path d="M9 2l3 13 4 8-7-4-7 4 4-8z"/></svg></div>
   <span class="w-[31px] text-center text-[15px] tracking-[-1px]">1:1</span><svg width="10" height="6" fill="#666"><use href="#c"/></svg>
  </div>
  <div class="w-[47px] bg-[#f5f5f5] flex items-center -mr-[3px]"><svg class="ml-[2px]" width="22" height="24" fill="#555"><path d="M9 1h4l1 3 3 1 3-2 2 3-2 3v2l2 3-2 3-3-1-3 2-1 4H9l-1-4-3-2-3 1-2-3 2-3v-2L0 6l2-3 3 2 3-1z"/><circle cx="11" cy="12" r="3.500" fill="#f5f5f5"/></svg><svg class="ml-[10px]" width="10" height="6" fill="#666"><use href="#c"/></svg></div>
  <div class="w-[31px] ml-[1px] bg-[#f5f5f5] flex items-center justify-center"><svg width="20" height="20" fill="#555"><path d="M9 0h2.500v20H9zM0 9h20v2.500H0z"/></svg></div>
  <div class="w-[30px] bg-[#f5f5f5] flex items-center justify-center"><svg width="24" height="24" fill="none" stroke="#777"><rect x="2" y="1" width="8" height="8"/><circle cx="18" cy="11" r="4.500"/><path d="M7 15l4 8H3z"/></svg></div>
  <div class="w-[36px] bg-[#f5f5f5] flex items-center justify-center"><svg width="22" height="24" fill="none"><path d="M1 2h16v20H1z" stroke="#888"/><path d="M1 14L6 4l5 8 5-10" stroke="#5ea9e0"/><path d="M14 9l7 14H7z" fill="#ee7d21"/></svg></div>
  <div class="w-[31px] bg-[#f5f5f5] flex items-center justify-center"><svg width="20" height="18" fill="none"><rect x=".5" y=".5" width="19" height="17" stroke="#888"/><path d="M4 14l4-4M12 8l4-4" stroke="#555"/><path d="M3 15V11l4 4zM17 3v4l-4-4z" fill="#555"/></svg></div>
  <div class="w-[32px] bg-[#f5f5f5] flex items-center justify-center"><svg width="21" height="18"><use href="#ham"/></svg></div>
 </div>
</div>
</div>

<!-- taskbar -->
<div class="flex-1 relative flex items-center pt-[2px] bg-[linear-gradient(90deg,#2a1c1d_0%,#3a2419_50%,#3c2518_100%)] text-white">
 <svg class="ml-[27px]" width="28" height="32"><ellipse cx="12" cy="15" rx="12" ry="15" fill="#f29a1f"/><path d="M10 24c-4 0-5-6 0-6 1-4 8-4 9 0 6-1 7 6 1 6z" fill="#8dc3ee"/></svg>
 <div class="ml-[8px] w-[120px] flex flex-col text-[15px] leading-[20px] text-[#dcdcdc]"><span>22°C</span><span class="whitespace-nowrap">Ger. Ensolarado</span></div>
 <svg class="ml-[235px]" width="29" height="29"><defs><linearGradient id="w" x1="0" y1="0" x2="1" y2="1"><stop offset="0" stop-color="#6ad6fb"/><stop offset="1" stop-color="#1a9be0"/></linearGradient></defs><path d="M0 0h14v14H0zM15 0h14v14H15zM0 15h14v14H0zM15 15h14v14H15z" fill="url(#w)"/></svg>
 <div class="ml-[18px] w-[274px] h-[38px] rounded-full bg-[#f5f3ef] flex items-center pl-[14px] text-[#444] text-[16px]"><svg width="20" height="20" fill="none" stroke="#222" stroke-width="2"><circle cx="9" cy="8.500" r="6.500"/><path d="M13.500 13.500l5 5"/></svg><span class="ml-[12px]">Procurar</span></div>
 <div class="flex items-center ml-[12px]">
  <div class="w-[38px] flex justify-center"><svg width="30" height="32"><circle cx="22" cy="7" r="4" fill="#7b83d6"/><circle cx="14" cy="5" r="5" fill="#7b83eb"/><path d="M18 13h12v12a5 5 0 0 1-10 2z" fill="#6a72c9"/><path d="M7 12h15v16a6 6 0 0 1-15 0z" fill="#7b83eb"/><rect y="10" width="15" height="15" rx="2" fill="#4b53bc"/><text x="7.500" y="22" text-anchor="middle" font-size="12" font-weight="700" fill="#fff">T</text></svg></div>
 </div>
 <div class="w-[55px] ml-[8px] flex justify-center"><svg width="30" height="36" fill="none"><ellipse cx="15" cy="18" rx="11.500" ry="15" stroke="#e0182d" stroke-width="7"/></svg></div>
 <div class="w-[55px] flex justify-center relative"><svg width="32" height="38"><rect x="1" y="0" width="22" height="24" rx="2" fill="#efefef"/><rect x="5" y="3" width="13" height="13" fill="none" stroke="#c8462c" stroke-width="2.500" stroke-dasharray="3 1.500"/><path d="M8 8h9v14H8z" fill="#c9ccd4"/><path d="M18 22l9-4M18 22l0 10" stroke="#2a7fc0" stroke-width="1.500"/><circle cx="28" cy="18" r="2.500" fill="none" stroke="#2a7fc0" stroke-width="1.500"/><circle cx="17" cy="34" r="2.500" fill="none" stroke="#2a7fc0" stroke-width="1.500"/></svg><span class="absolute -bottom-[9px] left-[24px] w-[8px] h-[3px] rounded bg-[#aaa]"></span></div>
 <div class="w-[55px] flex justify-center"><svg width="30" height="36"><ellipse cx="15" cy="18" rx="15" ry="18" fill="#fff"/><path d="M15 8a10 10 0 0 0-8.500 15L5.500 29l6-1.500A10 10 0 1 0 15 8z" fill="none" stroke="#37bb5a" stroke-width="2"/><path d="M11 13c-2 3 3 9 7 9 2-1 2-2 1-3l-2-1-1 1c-1 0-3-2-3-3l1-1-1-2z" fill="#37bb5a"/></svg></div>
 <div class="w-[55px] flex justify-center"><svg width="30" height="36"><defs><linearGradient id="e" x1="0" y1="0" x2="1" y2="0"><stop offset="0" stop-color="#1463b3"/><stop offset="1" stop-color="#38c8e0"/></linearGradient></defs><ellipse cx="15" cy="18" rx="15" ry="18" fill="url(#e)"/><path d="M3 10C10 0 26 2 30 17c-4-6-10-7-12-4-2 4 2 9 8 11-6 8-20 8-20-5 0-4 4-6 8-5-4-4-8-4-11-4z" fill="#52cf72"/><path d="M14 15c-5 0-8 3-8 7 0 7 9 13 20 4-6 0-14-4-12-11z" fill="#0e4f8f"/></svg></div>
 <div class="w-[55px] flex justify-center"><svg width="32" height="36"><path d="M23 0l9 4v28l-9 4L9 22l-6 5-3-2V11l3-2 6 5z" fill="#1d8fd6"/><path d="M23 10v16l-10-8zM3 14v8l4-4z" fill="#3c2518"/></svg></div>
 <div class="w-[55px] flex justify-center"><div class="w-[28px] h-[32px] rounded-[4px] bg-[#4d0a2b] text-[#ff3d9a] text-[16px] font-medium flex items-center justify-center">Id</div></div>
 <div class="w-[55px] flex justify-center"><svg width="13" height="26" fill="#d81f26"><path d="M0 0h4l5 18V0h4v26H9L4 8v18H0z"/></svg></div>
 <div class="w-[55px] flex justify-center relative"><svg width="32" height="36" fill="none"><path d="M16 2a15 15 0 0 0-12.500 24L2 34l8-2.500A15.500 15.500 0 1 0 16 2z" stroke="#2ecc55" stroke-width="3"/><path d="M11 10c-3 4 4 14 10 14 3-1 3-3 2-4l-3-2-2 2c-2 0-4-3-5-5l2-2-2-3z" fill="#2ecc55"/></svg><span class="absolute -bottom-[9px] left-[24px] w-[8px] h-[3px] rounded bg-[#aaa]"></span></div>
 <div class="w-[55px] flex justify-center"><svg width="32" height="24"><ellipse cx="16" cy="11" rx="13" ry="9" fill="#6b665c"/><circle cx="10" cy="9" r="4" fill="#e8e8e8"/><circle cx="19" cy="9" r="4" fill="#e8e8e8"/><circle cx="10" cy="9" r="1.500" fill="#111"/><circle cx="19" cy="9" r="1.500" fill="#111"/><circle cx="3" cy="11" r="3" fill="#222"/><path d="M20 15l10 7" stroke="#c9a86a" stroke-width="2"/></svg></div>
 <div class="w-[55px] flex justify-center"><div class="w-[29px] h-[34px] bg-[#b30f0f] text-white text-[24px] font-bold italic flex items-center justify-center font-[Liberation_Sans] tracking-[-1px]">Fz</div></div>
 <div class="w-[55px] flex justify-center"><svg width="31" height="32"><path d="M0 2a2 2 0 0 1 2-2h9l4 4h14a2 2 0 0 1 2 2v4H0z" fill="#e8a70f"/><path d="M0 7h31v23a2 2 0 0 1-2 2H2a2 2 0 0 1-2-2z" fill="#f9d14a"/><path d="M8 24h15v8H8z" fill="#2a86c8"/><path d="M11 24h9v3h-9z" fill="#7cc3ea"/></svg></div>
 <div class="w-[55px] flex justify-center relative"><div class="w-[30px] h-[36px] bg-[#e01a5a] rounded-[3px] relative text-white text-center font-bold text-[17px] leading-[26px] shadow-[-2px_0_0_#a01045]">A<div class="absolute bottom-0 inset-x-[3px] h-[10px] bg-[#5c0d2c] text-[8px] leading-[10px]">CAD</div></div><span class="absolute -bottom-[9px] left-[24px] w-[8px] h-[3px] rounded bg-[#aaa]"></span></div>
 <div class="w-[55px] ml-[2px] flex justify-center relative"><svg width="36" height="44" viewBox="0 0 36 44"><g transform="translate(0,8)"><circle cx="15" cy="18" r="15" fill="#e3402f"/><path d="M15 18L3 26a15 15 0 0 1-1-16z" fill="#36a852"/><path d="M15 18l14 -4a15 15 0 0 1-13 19z" fill="#f5c518"/><circle cx="15" cy="18" r="7" fill="#fff"/><circle cx="15" cy="18" r="5.500" fill="#3b78e7"/></g><ellipse cx="25" cy="10" rx="9" ry="10" fill="#e8bcb6"/><path d="M19 4c3-4 9-4 12 0" stroke="#5a4d42" stroke-width="3" fill="none"/></svg><span class="absolute -bottom-[5px] left-[24px] w-[8px] h-[3px] rounded bg-[#aaa]"></span></div>
 <div class="absolute left-[1649px] top-0 h-full flex items-center pt-[2px]">
  <svg width="15" height="9" fill="none" stroke="#fff" stroke-width="2"><path d="M1 8l6.500-6.500L14 8"/></svg>
  <svg class="ml-[23px]" width="20" height="17" fill="none" stroke="#fff" stroke-width="1.500"><path d="M1 6c5-6 13-6 18 0M4 9c3-4 9-4 12 0M7 12c2-2 4-2 6 0"/><circle cx="10" cy="15" r="1" fill="#fff"/></svg>
  <svg class="ml-[11px]" width="20" height="19" fill="none" stroke="#fff" stroke-width="1.300"><path d="M1 6h3l5-4v15l-5-4H1z"/><path d="M12 6c1 2 1 5 0 7" /><path d="M15 2c2 4 2 11 0 15" stroke="#6b5a4f"/></svg>
  <svg class="ml-[9px]" width="21" height="14" fill="none" stroke="#fff" stroke-width="1.500"><rect x="1" y="1" width="17" height="12" rx="3"/><path d="M3 3h7v8H3z" fill="#fff" stroke="none"/><path d="M19 5h2v4h-2z" fill="#fff" stroke="none"/></svg>
 </div>
 <div class="absolute right-[51px] top-0 h-full flex flex-col justify-center items-end text-[15px] leading-[20px] text-[#eee]"><span>12:14</span><span>01/10/2024</span></div>
 <svg class="absolute right-[24px] top-[24px]" width="16" height="24" fill="#8fd8f5"><path d="M8 0c4 0 6 3 6 7v8l2 3H0l2-3V7c0-4 2-7 6-7zM5 20h6a3 3 0 0 1-6 0z"/></svg>
</div>
</div>
</body></html>
